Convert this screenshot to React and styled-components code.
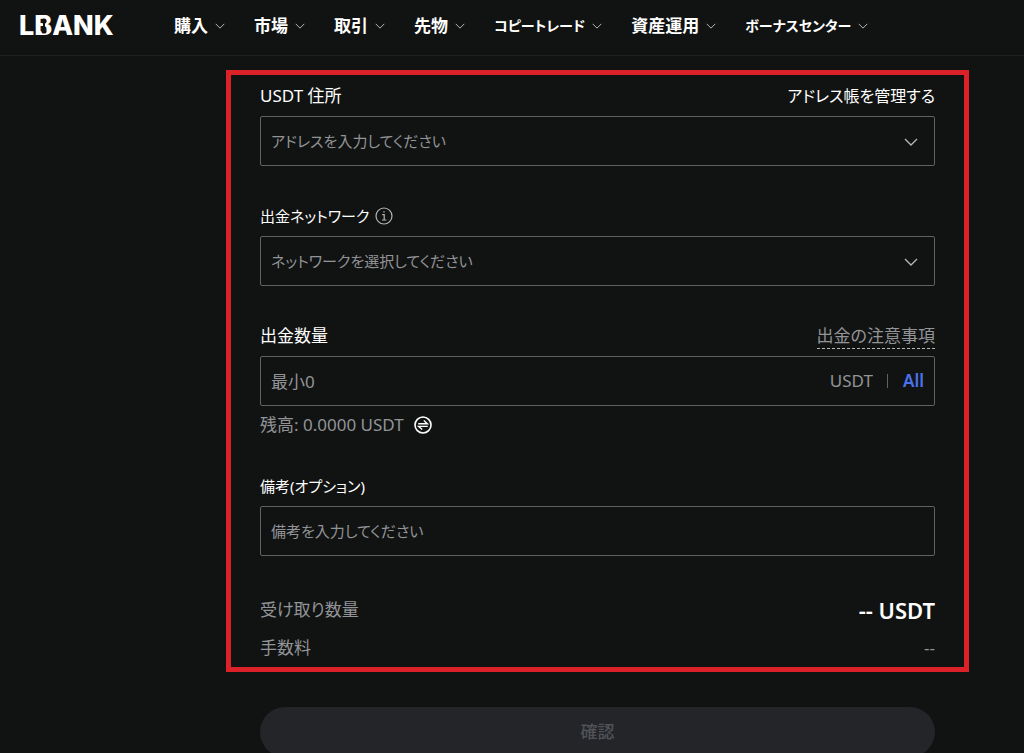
import React, { useState } from 'react';
import styled, { createGlobalStyle } from 'styled-components';

const App = () => {
  const [amount, setAmount] = useState('');
  const [memo, setMemo] = useState('');

  return (
    <>
      <GlobalStyle />
      <Header>
        <Logo href="#" aria-label="LBANK">
          LBANK
          <Keyhole viewBox="0 0 8 18" aria-hidden="true">
            <circle cx="4" cy="4" r="2.6" />
            <circle cx="4" cy="14" r="2.6" />
            <path d="M3 4h2v10H3z" />
          </Keyhole>
        </Logo>
        <Nav>
          {MENU.map((menu) => (
            <MenuButton key={menu.id} type="button" $kana={menu.kana}>
              {menu.name}
              <Chevron size={10} />
            </MenuButton>
          ))}
        </Nav>
      </Header>
      <Main>
        <Frame>
          <Field>
            <LabelRow>
              <Label htmlFor="address">USDT 住所</Label>
              <ManageLink href="#">アドレス帳を管理する</ManageLink>
            </LabelRow>
            <SelectWrap>
              <Select id="address" defaultValue="">
                <option value="">アドレスを入力してください</option>
              </Select>
              <Chevron size={14} />
            </SelectWrap>
          </Field>
          <Field>
            <LabelRow>
              <LabelGroup>
                <Label htmlFor="network" $kana>
                  出金ネットワーク
                </Label>
                <InfoIcon />
              </LabelGroup>
            </LabelRow>
            <SelectWrap>
              <Select id="network" defaultValue="">
                <option value="">ネットワークを選択してください</option>
              </Select>
              <Chevron size={14} />
            </SelectWrap>
          </Field>
          <Field>
            <LabelRow>
              <Label htmlFor="amount">出金数量</Label>
              <NoticeLink href="#">出金の注意事項</NoticeLink>
            </LabelRow>
            <InputBox>
              <Input
                id="amount"
                placeholder="最小0"
                value={amount}
                onChange={(e) => setAmount(e.target.value)}
              />
              <Unit>USDT</Unit>
              <Divider />
              <AllButton type="button">All</AllButton>
            </InputBox>
            <Balance>
              残高: 0.0000 USDT
              <IconButton type="button" aria-label="振替">
                <TransferIcon />
              </IconButton>
            </Balance>
          </Field>
          <Field>
            <LabelRow>
              <Label htmlFor="memo" $kana>
                備考(オプション)
              </Label>
            </LabelRow>
            <InputBox>
              <Input
                id="memo"
                placeholder="備考を入力してください"
                value={memo}
                onChange={(e) => setMemo(e.target.value)}
                $kana
              />
            </InputBox>
          </Field>
          <Summary>
            <SummaryRow>
              <dt>受け取り数量</dt>
              <Total>-- USDT</Total>
            </SummaryRow>
            <SummaryRow>
              <dt>手数料</dt>
              <dd>--</dd>
            </SummaryRow>
          </Summary>
        </Frame>
        <SubmitButton type="submit" disabled>
          確認
        </SubmitButton>
      </Main>
    </>
  );
};

export default App;

const Chevron = ({ size }) => (
  <ChevronSvg $size={size} viewBox="0 0 14 14" aria-hidden="true">
    <path d="M1 4l6 6 6-6" />
  </ChevronSvg>
);

const InfoIcon = () => (
  <Icon viewBox="0 0 18 18" aria-hidden="true">
    <circle cx="9" cy="9" r="8" />
    <path d="M7.2 7.6H9.2V13M7 13h4.4M8.3 4.9h1.4" />
  </Icon>
);

const TransferIcon = () => (
  <Icon viewBox="0 0 18 18" aria-hidden="true">
    <circle cx="9" cy="9" r="8" strokeWidth="1.6" />
    <path d="M4.2 7.8h9.2L9.8 4.6M13.8 10.4H4.6l3.6 3.2" strokeWidth="1.4" />
  </Icon>
);

const GlobalStyle = createGlobalStyle`
  * {
    box-sizing: border-box;
    margin: 0;
    padding: 0;
  }

  html {
    scrollbar-width: none;
  }

  body {
    background-color: #111312;
    color: #ffffff;
    font-family: 'Noto Sans', 'Noto Sans CJK JP', sans-serif;
    font-size: 17px;
    line-height: 24px;
    font-feature-settings: 'palt';
  }

  button,
  input,
  select {
    font: inherit;
    font-feature-settings: inherit;
    color: inherit;
    background: none;
    border: none;
    outline: none;
  }

  button,
  select {
    cursor: pointer;
  }

  a {
    color: inherit;
    text-decoration: none;
  }
`;

const Header = styled.header`
  display: flex;
  align-items: center;
  height: 56px;
  padding: 0 19px 3px;
  border-bottom: 1px solid #1e201f;
`;

const Logo = styled.a`
  position: relative;
  width: 155px;
  flex-shrink: 0;
  font-family: Inter, sans-serif;
  font-size: 27px;
  font-weight: 800;
`;

const Keyhole = styled.svg`
  position: absolute;
  top: 3px;
  left: 21px;
  width: 8px;
  height: 18px;
  fill: #111312;
`;

const Nav = styled.nav`
  display: flex;
  gap: 29px;
`;

const MenuButton = styled.button`
  display: flex;
  align-items: center;
  gap: 7px;
  font-size: ${({ $kana }) => ($kana ? 14 : 17)}px;
  font-weight: 700;
  white-space: nowrap;
`;

const ChevronSvg = styled.svg`
  width: ${({ $size }) => $size}px;
  height: ${({ $size }) => $size}px;
  fill: none;
  stroke: #b4b5b7;
  stroke-width: 1.4;
`;

const Main = styled.main`
  padding: 14px 55px 0 226px;
`;

const Frame = styled.section`
  padding: 9px 29px 7px;
  border: 5px solid #dd2128;
`;

const Field = styled.div`
  margin-bottom: 38px;
`;

const LabelRow = styled.div`
  display: flex;
  justify-content: space-between;
  align-items: center;
  height: 24px;
  margin-bottom: 8px;
`;

const LabelGroup = styled.div`
  display: flex;
  align-items: center;
  gap: 6px;
`;

const Label = styled.label`
  font-size: ${({ $kana }) => ($kana ? 15 : 17)}px;
`;

const ManageLink = styled.a`
  font-size: 16px;
  white-space: nowrap;
`;

const NoticeLink = styled.a`
  color: #929498;
  border-bottom: 1px dashed #b4b5b7;
`;

const Icon = styled.svg`
  display: block;
  width: 18px;
  height: 18px;
  fill: none;
  stroke: currentColor;
  stroke-width: 1.2;

  ${LabelGroup} & {
    color: #b4b5b7;
  }
`;

const SelectWrap = styled.div`
  position: relative;

  ${ChevronSvg} {
    position: absolute;
    top: 19px;
    right: 17px;
    pointer-events: none;
  }
`;

const Select = styled.select`
  display: block;
  width: 100%;
  height: 50px;
  padding: 0 40px 0 10px;
  appearance: none;
  border: 1px solid #5f6163;
  border-radius: 2px;
  color: #929498;
  font-size: 15px;
`;

const InputBox = styled.div`
  display: flex;
  align-items: center;
  height: 50px;
  padding: 0 10px;
  border: 1px solid #5f6163;
  border-radius: 2px;
`;

const Input = styled.input`
  flex: 1;
  min-width: 0;
  height: 100%;
  font-size: ${({ $kana }) => ($kana ? 15 : 17)}px;

  &::placeholder {
    color: #929498;
  }
`;

const Unit = styled.span`
  color: #929498;
`;

const Divider = styled.span`
  width: 1px;
  height: 14px;
  margin: 0 15px 0 14px;
  background-color: #5f6163;
`;

const AllButton = styled.button`
  color: #4a72ee;
  font-weight: 600;
`;

const Balance = styled.div`
  display: flex;
  align-items: center;
  gap: 10px;
  margin-top: 8px;
  line-height: 22px;
  color: #929498;
`;

const IconButton = styled.button`
  color: #ffffff;
`;

const Summary = styled.dl`
  display: grid;
  gap: 14px;
  padding-top: 4px;
`;

const SummaryRow = styled.div`
  display: flex;
  justify-content: space-between;
  color: #929498;
`;

const Total = styled.dd`
  color: #ffffff;
  font-size: 22px;
  font-weight: 600;
`;

const SubmitButton = styled.button`
  display: block;
  width: calc(100% - 68px);
  height: 50px;
  margin: 35px 34px 0;
  border-radius: 25px;
  background-color: #242529;
  color: #505257;
  font-weight: 500;
  cursor: default;
`;

const MENU = [
  { id: 1, name: '購入' },
  { id: 2, name: '市場' },
  { id: 3, name: '取引' },
  { id: 4, name: '先物' },
  { id: 5, name: 'コピートレード', kana: true },
  { id: 6, name: '資産運用' },
  { id: 7, name: 'ボーナスセンター', kana: true },
];
